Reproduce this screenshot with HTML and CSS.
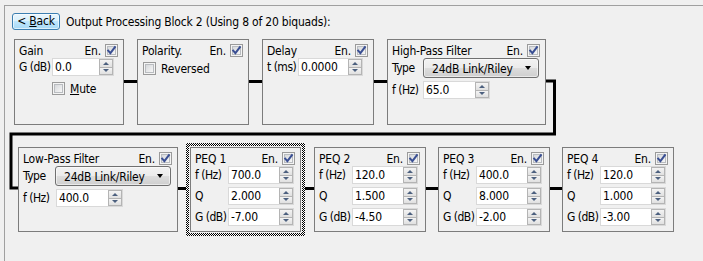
FILE: index.html
```html
<!DOCTYPE html>
<html>
<head>
<meta charset="utf-8">
<title>Output Processing Block 2</title>
<link rel="stylesheet" href="styles.css">
</head>
<body>
<div class="frame">
  <div class="header">
    <button class="back">&lt; <u>B</u>ack</button>
    <span class="title">Output Processing Block 2 (Using 8 of 20 biquads):</span>
  </div>

  <div class="row row1">
    <div class="box w-gain">
      <div class="head"><span>Gain</span><span class="en">En. <span class="cb on"><svg viewBox="0 0 13 13" width="13" height="13"><path d="M3.2 6.6 L5.4 9.2 L9.9 3.2" /></svg></span></span></div>
      <div class="field"><span class="lbl">G (dB)</span><span class="spin w62"><span class="val">0.0</span><span class="arrows"><i class="up"></i><i class="dn"></i></span></span></div>
      <div class="check mute"><span class="cb"></span><span><u>M</u>ute</span></div>
    </div>
    <div class="link"></div>
    <div class="box w-std">
      <div class="head"><span>Polarity.</span><span class="en">En. <span class="cb on"><svg viewBox="0 0 13 13" width="13" height="13"><path d="M3.2 6.6 L5.4 9.2 L9.9 3.2" /></svg></span></span></div>
      <div class="check rev"><span class="cb"></span><span>Reversed</span></div>
    </div>
    <div class="link"></div>
    <div class="box w-std">
      <div class="head"><span>Delay</span><span class="en">En. <span class="cb on"><svg viewBox="0 0 13 13" width="13" height="13"><path d="M3.2 6.6 L5.4 9.2 L9.9 3.2" /></svg></span></span></div>
      <div class="field"><span class="lbl l31">t (ms)</span><span class="spin w65"><span class="val">0.0000</span><span class="arrows"><i class="up"></i><i class="dn"></i></span></span></div>
    </div>
    <div class="link"></div>
    <div class="box w-wide">
      <div class="head"><span>High-Pass Filter</span><span class="en">En. <span class="cb on"><svg viewBox="0 0 13 13" width="13" height="13"><path d="M3.2 6.6 L5.4 9.2 L9.9 3.2" /></svg></span></span></div>
      <div class="field tall"><span class="lbl l31">Type</span><span class="select">24dB Link/Riley</span></div>
      <div class="field"><span class="lbl l31">f (Hz)</span><span class="spin w67"><span class="val">65.0</span><span class="arrows"><i class="up"></i><i class="dn"></i></span></span></div>
    </div>
  </div>

  <div class="row row2">
    <div class="box w-lpf">
      <div class="head"><span>Low-Pass Filter</span><span class="en">En. <span class="cb on"><svg viewBox="0 0 13 13" width="13" height="13"><path d="M3.2 6.6 L5.4 9.2 L9.9 3.2" /></svg></span></span></div>
      <div class="field tall"><span class="lbl l32">Type</span><span class="select">24dB Link/Riley</span></div>
      <div class="field"><span class="lbl">f (Hz)</span><span class="spin w67"><span class="val">400.0</span><span class="arrows"><i class="up"></i><i class="dn"></i></span></span></div>
    </div>
    <div class="link l8"></div>
    <div class="focus">
      <div class="focus-in">
        <div class="box w-peq1">
          <div class="head"><span>PEQ 1</span><span class="en">En. <span class="cb on"><svg viewBox="0 0 13 13" width="13" height="13"><path d="M3.2 6.6 L5.4 9.2 L9.9 3.2" /></svg></span></span></div>
          <div class="field"><span class="lbl">f (Hz)</span><span class="spin"><span class="val">700.0</span><span class="arrows"><i class="up"></i><i class="dn"></i></span></span></div>
          <div class="field"><span class="lbl">Q</span><span class="spin"><span class="val">2.000</span><span class="arrows"><i class="up"></i><i class="dn"></i></span></span></div>
          <div class="field"><span class="lbl">G (dB)</span><span class="spin"><span class="val">-7.00</span><span class="arrows"><i class="up"></i><i class="dn"></i></span></span></div>
        </div>
      </div>
    </div>
    <div class="link l9"></div>
    <div class="box w-std">
      <div class="head"><span>PEQ 2</span><span class="en">En. <span class="cb on"><svg viewBox="0 0 13 13" width="13" height="13"><path d="M3.2 6.6 L5.4 9.2 L9.9 3.2" /></svg></span></span></div>
      <div class="field"><span class="lbl">f (Hz)</span><span class="spin"><span class="val">120.0</span><span class="arrows"><i class="up"></i><i class="dn"></i></span></span></div>
      <div class="field"><span class="lbl">Q</span><span class="spin"><span class="val">1.500</span><span class="arrows"><i class="up"></i><i class="dn"></i></span></span></div>
      <div class="field"><span class="lbl">G (dB)</span><span class="spin"><span class="val">-4.50</span><span class="arrows"><i class="up"></i><i class="dn"></i></span></span></div>
    </div>
    <div class="link l12"></div>
    <div class="box w-std">
      <div class="head"><span>PEQ 3</span><span class="en">En. <span class="cb on"><svg viewBox="0 0 13 13" width="13" height="13"><path d="M3.2 6.6 L5.4 9.2 L9.9 3.2" /></svg></span></span></div>
      <div class="field"><span class="lbl">f (Hz)</span><span class="spin"><span class="val">400.0</span><span class="arrows"><i class="up"></i><i class="dn"></i></span></span></div>
      <div class="field"><span class="lbl">Q</span><span class="spin"><span class="val">8.000</span><span class="arrows"><i class="up"></i><i class="dn"></i></span></span></div>
      <div class="field"><span class="lbl">G (dB)</span><span class="spin"><span class="val">-2.00</span><span class="arrows"><i class="up"></i><i class="dn"></i></span></span></div>
    </div>
    <div class="link l12"></div>
    <div class="box w-std">
      <div class="head"><span>PEQ 4</span><span class="en">En. <span class="cb on"><svg viewBox="0 0 13 13" width="13" height="13"><path d="M3.2 6.6 L5.4 9.2 L9.9 3.2" /></svg></span></span></div>
      <div class="field"><span class="lbl">f (Hz)</span><span class="spin"><span class="val">120.0</span><span class="arrows"><i class="up"></i><i class="dn"></i></span></span></div>
      <div class="field"><span class="lbl">Q</span><span class="spin"><span class="val">1.000</span><span class="arrows"><i class="up"></i><i class="dn"></i></span></span></div>
      <div class="field"><span class="lbl">G (dB)</span><span class="spin"><span class="val">-3.00</span><span class="arrows"><i class="up"></i><i class="dn"></i></span></span></div>
    </div>
  </div>
</div>

<svg class="wrap" width="703" height="261" viewBox="0 0 703 261">
  <path d="M546 81 H554.5 V134 H11 V188 H18" fill="none" stroke="#000" stroke-width="3" stroke-linejoin="miter"/>
</svg>
</body>
</html>
```

FILE: styles.css
```css
* { box-sizing: border-box; }

body {
  margin: 0;
  width: 703px;
  height: 261px;
  overflow: hidden;
  position: relative;
  background: #f0f0f0;
  color: #000;
  font-family: "DejaVu Sans Condensed", "Liberation Sans", sans-serif;
  font-size: 12px;
  letter-spacing: -0.2px;
  line-height: 1;
}

.frame {
  margin: 5px 0 0 4px;
  height: 256px;
  border-top: 1px solid #a0a0a0;
  border-left: 1px solid #a0a0a0;
}

.header {
  display: flex;
  align-items: center;
  padding: 7px 0 0 7px;
}

.back {
  width: 48px;
  height: 17px;
  margin: 0 6px 0 0;
  padding: 0 0 1px;
  border: 1px solid #3c7fb1;
  border-radius: 3px;
  background: linear-gradient(#eaf6fd, #d9f0fc 50%, #bee6fd 50%, #a7d9f5);
  box-shadow: inset 0 0 0 1px rgba(255,255,255,0.6);
  font: inherit;
  letter-spacing: inherit;
  color: #000;
}

.row {
  display: flex;
  align-items: flex-start;
}

.row1 { margin-top: 9px; padding-left: 9px; }
.row2 { margin-top: 18px; padding-left: 13px; }

.link {
  width: 13px;
  height: 3px;
  margin-top: 41px;
  background: #000;
  flex: none;
}
.row2 .link { margin-top: 44px; }
.link.l8 { width: 8px; }
.link.l9 { width: 9px; }
.link.l12 { width: 12px; }

.box {
  flex: none;
  height: 86px;
  padding: 4px 5px 0 4px;
  border: 1px solid #7c7c7c;
}
.row2 .box { height: 85px; margin-top: 4px; }
.row2 .focus .box { margin-top: 0; }

.w-gain { width: 110px; }
.w-std { width: 112px; }
.w-wide { width: 159px; }
.w-lpf { width: 160px; }
.w-peq1 { width: 111px; }

.focus {
  flex: none;
  padding: 3px;
  background: repeating-conic-gradient(#000 0 25%, #fff 0 50%) 0 0 / 2px 2px;
}
.focus-in {
  padding: 1px;
  background: #f0f0f0;
}

.head {
  display: flex;
  justify-content: space-between;
  align-items: center;
  height: 13px;
  white-space: nowrap;
}

.en {
  display: flex;
  align-items: center;
  gap: 4px;
}

.cb {
  display: inline-block;
  position: relative;
  width: 13px;
  height: 13px;
  flex: none;
  border: 1px solid #9a9a9a;
  background: #f4f4f4;
}
.cb::before {
  content: "";
  position: absolute;
  inset: 1px;
  border: 1px solid #b9bcc0;
  background: linear-gradient(135deg, #d6d8db, #f7f7f7);
}
.cb svg {
  position: absolute;
  left: -1px;
  top: -1px;
}
.cb svg path {
  fill: none;
  stroke: #3a4f93;
  stroke-width: 2;
  stroke-linecap: square;
}

.field {
  display: flex;
  align-items: center;
  height: 18px;
  margin-top: 1px;
  white-space: nowrap;
}
.field + .field { margin-top: 3px; }
.field.tall { height: 20px; }

.lbl {
  width: 33px;
  flex: none;
  letter-spacing: -0.5px;
}
.lbl.l31 { width: 31px; }
.lbl.l32 { width: 32px; }

.spin {
  display: flex;
  width: 66px;
  height: 18px;
  background: #fff;
  border: 1px solid #d9d9d9;
}
.spin.w62 { width: 62px; }
.spin.w65 { width: 65px; }
.spin.w67 { width: 67px; }

.val {
  flex: 1;
  padding: 2px 0 0 2px;
}

.arrows {
  width: 15px;
  flex: none;
  display: flex;
  flex-direction: column;
  background: #fff;
  padding: 0 0 0 1px;
}
.arrows i {
  flex: 1;
  display: flex;
  align-items: center;
  justify-content: center;
  border: 1px solid #b4b4b4;
  background: linear-gradient(#f4f4f4, #e0e0e0);
}
.arrows i + i { border-top: 0; }
.arrows i::after {
  content: "";
  width: 0;
  height: 0;
  border-left: 3px solid transparent;
  border-right: 3px solid transparent;
}
.arrows .up::after { border-bottom: 3px solid #4c607f; }
.arrows .dn::after { border-top: 3px solid #4c607f; }

.select {
  position: relative;
  display: flex;
  align-items: center;
  width: 116px;
  height: 20px;
  padding: 1px 0 0 8px;
  border: 1px solid #707070;
  border-radius: 3px;
  background: linear-gradient(#f2f2f2, #ebebeb 50%, #dddddd 50%, #cfcfcf);
  box-shadow: inset 0 0 0 1px rgba(255,255,255,0.55);
}
.select::after {
  content: "";
  position: absolute;
  right: 7px;
  top: 7px;
  border-left: 3.5px solid transparent;
  border-right: 3.5px solid transparent;
  border-top: 4px solid #000;
}

.check {
  display: flex;
  align-items: center;
  gap: 5px;
  white-space: nowrap;
}
.check.mute { margin: 6px 0 0 33px; }
.check.rev { margin: 5px 0 0 1px; }

.wrap {
  position: absolute;
  left: 0;
  top: 0;
  pointer-events: none;
}
```
